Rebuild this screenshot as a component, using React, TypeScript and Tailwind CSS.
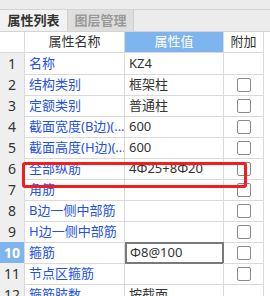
import React from "react"

const font = { fontFamily: '"Noto Sans", "Noto Sans CJK SC", sans-serif' }

type Row = { name: string; value?: string; check: boolean }

const rows: Row[] = [
  { name: "名称", value: "KZ4", check: false },
  { name: "结构类别", value: "框架柱", check: true },
  { name: "定额类别", value: "普通柱", check: true },
  { name: "截面宽度(B边)(...", value: "600", check: true },
  { name: "截面高度(H边)(...", value: "600", check: true },
  { name: "全部纵筋", value: "4Φ25+8Φ20", check: true },
  { name: "角筋", check: true },
  { name: "B边一侧中部筋", check: true },
  { name: "H边一侧中部筋", check: true },
  { name: "箍筋", value: "Φ8@100", check: true },
  { name: "节点区箍筋", check: true },
  { name: "箍筋肢数", value: "按截面", check: false },
]

function Checkbox() {
  return <div className="w-[14px] h-[14px] rounded-[2px] border border-[#8a8a8a] bg-white" />
}

export default function App() {
  return (
    <div className="relative w-[270px] h-[296px] overflow-hidden bg-white text-[13px] text-[#333]" style={font}>
      {/* 顶部空白条 */}
      <div className="h-[10px] bg-[#ececec] border-b border-[#d4d4d4]" />

      {/* 标签页 */}
      <div className="flex h-[22px] bg-[#ececec] border-b border-[#d4d4d4]">
        <div className="w-[68px] flex items-center justify-center bg-[#f2f2f2] border-r border-[#cfcfcf] font-bold text-[#333]">
          属性列表
        </div>
        <div className="w-[66px] flex items-center justify-center bg-[#dedede] border-r border-[#cfcfcf] font-bold text-[#9a9a9a]">
          图层管理
        </div>
      </div>

      {/* 表头 */}
      <div className="grid grid-cols-[25px_100px_99px_40px_1fr] h-[21px]">
        <div className="bg-white border-r border-b border-[#dadada]" />
        <div className="flex items-center justify-center border-r border-b border-[#dadada] text-[#333]">属性名称</div>
        <div className="flex items-center justify-center bg-[#7fb5ee] border-r border-b border-[#dadada] text-white">属性值</div>
        <div className="flex items-center justify-center border-r border-b border-[#dadada] text-[#333]">附加</div>
        <div />
      </div>

      {rows.map((r, i) => {
        const selected = i === 9
        return (
          <div key={i} className="grid grid-cols-[25px_100px_99px_40px_1fr] h-[21px]">
            <div
              className={
                selected
                  ? "flex items-center justify-center bg-[#7fb5ee] text-white font-bold border-r border-b border-[#dadada] text-[14px]"
                  : "flex items-center justify-center bg-[#efefef] text-[#333] border-r border-b border-[#dadada] text-[14px]"
              }
            >
              {i + 1}
            </div>
            <div className="flex items-center pl-[4px] text-[#2351e8] whitespace-nowrap overflow-hidden border-r border-b border-[#dadada]">
              {r.name}
            </div>
            <div
              className={
                selected
                  ? "flex items-center pl-[3px] border-2 border-[#7a7a7a] whitespace-nowrap overflow-hidden"
                  : "flex items-center pl-[4px] border-r border-b border-[#dadada] whitespace-nowrap overflow-hidden"
              }
            >
              {r.value}
            </div>
            <div className="flex items-center justify-center border-r border-b border-[#dadada]">
              {r.check && <Checkbox />}
            </div>
            <div />
          </div>
        )
      })}

      {/* 红色标注框 */}
      <div className="absolute left-[22px] top-[162px] w-[225px] h-[26px] border-[3px] border-[#f21d1d] rounded-[3px]" />
    </div>
  )
}
